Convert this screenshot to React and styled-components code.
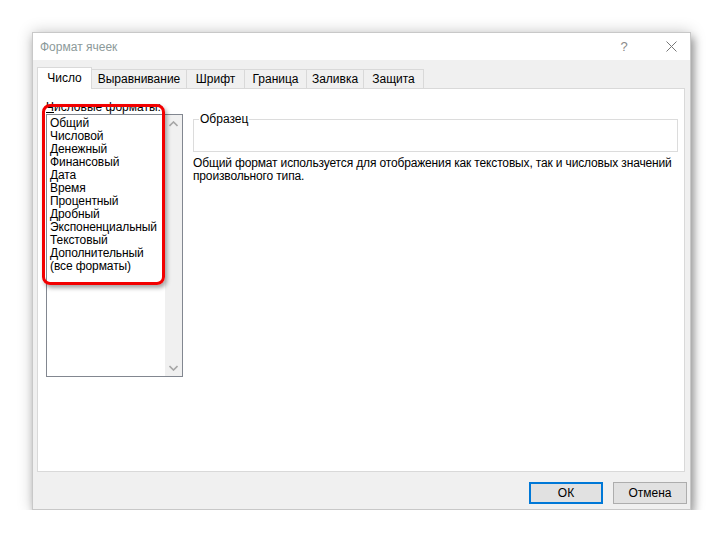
import React from 'react';
import styled, { createGlobalStyle, css } from 'styled-components';

const GlobalStyle = createGlobalStyle`
  body {
    margin: 0;
    background: #ffffff;
    font-family: "Liberation Sans", Arial, sans-serif;
    font-size: 12px;
    color: #000000;
  }
`;

const Page = styled.div`
  padding: 32px 0 0 32px;
`;

const Dialog = styled.div`
  width: 659px;
  height: 478px;
  display: flex;
  flex-direction: column;
  background: #f0f0f0;
  box-sizing: border-box;
  border: 1px solid #c8c8c8;
  box-shadow: 0 0 14px rgba(0, 0, 0, 0.22), 3px 6px 8px rgba(0, 0, 0, 0.32);
`;

const TitleBar = styled.div`
  height: 27px;
  display: flex;
  align-items: center;
  background: #ffffff;
  padding-left: 7px;
`;

const Title = styled.div`
  flex: 1;
  color: #8c9a9a;
  font-size: 12px;
`;

const Controls = styled.div`
  display: flex;
  align-items: center;
  gap: 17px;
  height: 100%;
`;

const HelpButton = styled.div`
  width: 22px;
  text-align: center;
  color: #8a8a8a;
  font-size: 13px;
`;

const CloseButton = styled.div`
  width: 38px;
  display: flex;
  justify-content: center;
`;

const Body = styled.div`
  flex: 1;
  display: flex;
  flex-direction: column;
  padding: 7px 5px 0 4px;
`;

const Tabs = styled.div`
  display: flex;
  align-items: flex-end;
  height: 21px;
  position: relative;
  z-index: 1;
`;

const Tab = styled.div`
  box-sizing: border-box;
  height: 19px;
  width: ${(p) => p.$w}px;
  display: flex;
  align-items: center;
  justify-content: center;
  border: 1px solid #d9d9d9;
  border-bottom: none;
  margin-left: -1px;
  background: #f0f0f0;
  ${(p) => p.$active && css`
    height: 22px;
    margin-bottom: -1px;
    margin-left: 0;
    background: #ffffff;
    padding-bottom: 2px;
  `}
`;

const Panel = styled.div`
  height: 384px;
  box-sizing: border-box;
  border: 1px solid #d9d9d9;
  background: #ffffff;
  display: flex;
  padding: 12px 6px 0 8px;
  position: relative;
`;

const LeftColumn = styled.div`
  width: 137px;
  display: flex;
  flex-direction: column;
`;

const Label = styled.div`
  height: 13px;
  line-height: 13px;
  u { text-decoration: underline; }
`;

const ListBox = styled.div`
  height: 263px;
  box-sizing: border-box;
  border: 1px solid #828790;
  display: flex;
`;

const Items = styled.div`
  flex: 1;
  padding: 2px 0 0 3px;
  letter-spacing: -0.1px;
`;

const Item = styled.div`
  height: 13px;
  line-height: 13px;
  white-space: nowrap;
`;

const ScrollBar = styled.div`
  width: 17px;
  background: #f0f0f0;
  display: flex;
  flex-direction: column;
  justify-content: space-between;
  align-items: center;
  padding: 6px 0 5px;
`;

const RightColumn = styled.div`
  flex: 1;
  margin-left: 10px;
  padding-top: 12px;
`;

const Group = styled.fieldset`
  margin: 0;
  height: 39px;
  box-sizing: border-box;
  border: 1px solid #dcdcdc;
  padding: 0;
  legend {
    margin-left: 5px;
    padding: 0 1px;
    line-height: 13px;
  }
`;

const Description = styled.div`
  margin-top: 5px;
  line-height: 13px;
  white-space: nowrap;
  letter-spacing: -0.15px;
`;

const Highlight = styled.div`
  position: absolute;
  left: 4px;
  top: 15px;
  width: 123px;
  height: 181px;
  box-sizing: border-box;
  border: 3px solid #f20000;
  border-radius: 8px;
  box-shadow: 2px 3px 4px rgba(0, 0, 0, 0.35);
`;

const Footer = styled.div`
  flex: 1;
  display: flex;
  justify-content: flex-end;
  align-items: flex-start;
  gap: 10px;
  padding: 10px 0 0;
  margin-right: -2px;
`;

const Button = styled.div`
  width: 74px;
  height: 22px;
  box-sizing: border-box;
  display: flex;
  align-items: center;
  justify-content: center;
  background: #e1e1e1;
  border: ${(p) => (p.$primary ? '2px solid #0078d7' : '1px solid #adadad')};
`;

const tabs = [
  ['Число', 55],
  ['Выравнивание', 96],
  ['Шрифт', 59],
  ['Граница', 63],
  ['Заливка', 58],
  ['Защита', 61],
];

const formats = [
  'Общий',
  'Числовой',
  'Денежный',
  'Финансовый',
  'Дата',
  'Время',
  'Процентный',
  'Дробный',
  'Экспоненциальный',
  'Текстовый',
  'Дополнительный',
  '(все форматы)',
];

function Chevron({ up }) {
  return (
    <svg width="9" height="6" viewBox="0 0 9 6">
      <path
        d={up ? 'M0.5 5 L4.5 1 L8.5 5' : 'M0.5 1 L4.5 5 L8.5 1'}
        fill="none"
        stroke="#a6a6a6"
        strokeWidth="1.6"
      />
    </svg>
  );
}

export default function App() {
  return (
    <Page>
      <GlobalStyle />
      <Dialog>
        <TitleBar>
          <Title>Формат ячеек</Title>
          <Controls>
            <HelpButton>?</HelpButton>
            <CloseButton>
              <svg width="11" height="11" viewBox="0 0 11 11">
                <path d="M0.5 0.5 L10.5 10.5 M10.5 0.5 L0.5 10.5" stroke="#777" strokeWidth="1" />
              </svg>
            </CloseButton>
          </Controls>
        </TitleBar>
        <Body>
          <Tabs>
            {tabs.map(([name, w], i) => (
              <Tab key={name} $w={w} $active={i === 0}>{name}</Tab>
            ))}
          </Tabs>
          <Panel>
            <LeftColumn>
              <Label><u>Ч</u>исловые форматы:</Label>
              <ListBox>
                <Items>
                  {formats.map((f) => <Item key={f}>{f}</Item>)}
                </Items>
                <ScrollBar>
                  <Chevron up />
                  <Chevron />
                </ScrollBar>
              </ListBox>
            </LeftColumn>
            <RightColumn>
              <Group>
                <legend>Образец</legend>
              </Group>
              <Description>
                Общий формат используется для отображения как текстовых, так и числовых значений
                <br />
                произвольного типа.
              </Description>
            </RightColumn>
            <Highlight />
          </Panel>
          <Footer>
            <Button $primary>ОК</Button>
            <Button>Отмена</Button>
          </Footer>
        </Body>
      </Dialog>
    </Page>
  );
}
